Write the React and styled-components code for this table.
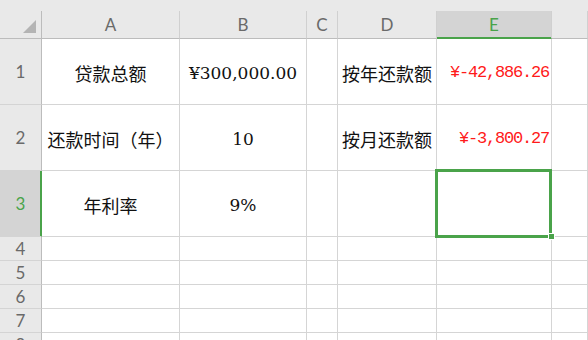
import styled, { createGlobalStyle, css } from 'styled-components'

const COLS = '42px 138px 127px 31px 99px 115px 1fr'
const GREEN = '#4aa34a'

const GlobalStyle = createGlobalStyle`
    body {
        margin: 0;
        overflow: hidden;
        background: #fff;
    }
`

const Sheet = styled.div`
    width: 588px;
    height: 340px;
    overflow: hidden;
    background: #fff;
`

const HeaderRow = styled.div`
    display: grid;
    grid-template-columns: ${COLS};
    background: #e9e9e9;
    padding-top: 11px;
`

const Corner = styled.div`
    height: 28px;
    box-sizing: border-box;
    border-right: 1px solid #bcbcbc;
    border-bottom: 1px solid #bcbcbc;
    display: flex;
    justify-content: flex-end;
    align-items: flex-end;
    padding: 0 5px 5px 0;
`

const headText = css`
    font-family: Lato, "Liberation Sans", sans-serif;
    font-size: 17px;
    color: #6a6a6a;
`

const ColHead = styled.div`
    ${headText};
    height: 28px;
    box-sizing: border-box;
    border-right: 1px solid #d0d0d0;
    border-bottom: 1px solid #bcbcbc;
    display: flex;
    align-items: center;
    justify-content: center;

    ${({ $active }) => $active && css`
        background: #d4d4d4;
        color: ${GREEN};
        border-bottom-color: ${GREEN};
        box-shadow: inset 0 -1px 0 ${GREEN};
    `}
`

const Row = styled.div`
    display: grid;
    grid-template-columns: ${COLS};
    height: ${({ $h }) => $h}px;
`

const RowHead = styled.div`
    ${headText};
    box-sizing: border-box;
    background: #e9e9e9;
    border-right: 1px solid #bcbcbc;
    border-bottom: 1px solid #d4d4d4;
    display: flex;
    align-items: center;
    justify-content: center;

    ${({ $active }) => $active && css`
        background: #d4d4d4;
        color: ${GREEN};
        border-right-color: ${GREEN};
        box-shadow: inset -1px 0 0 ${GREEN};
    `}
`

const Cell = styled.div`
    position: relative;
    box-sizing: border-box;
    border-right: 1px solid #d5d5d5;
    border-bottom: 1px solid #d5d5d5;
    display: flex;
    align-items: center;
    justify-content: ${({ $align }) => ($align === 'right' ? 'flex-end' : 'center')};
    padding: 2px 2px 0;
    white-space: nowrap;
`

const Label = styled.span`
    font-family: "Noto Sans CJK SC", sans-serif;
    font-size: 18px;
    color: #111;
`

const Amount = styled.span`
    font-family: "DejaVu Serif", serif;
    font-size: 17px;
    color: #111;
`

const Money = styled.span`
    font-family: "Liberation Mono", monospace;
    font-size: 17px;
    letter-spacing: -1.2px;
    color: #ff1a1a;
`

// active cell frame with the fill handle in its corner
const Selection = styled.div`
    position: absolute;
    left: -2px;
    top: -2px;
    right: -1px;
    bottom: -2px;
    border: 3px solid ${GREEN};
    z-index: 2;
    pointer-events: none;
`

const FillHandle = styled.div`
    position: absolute;
    right: -6px;
    bottom: -5px;
    width: 5px;
    height: 5px;
    background: ${GREEN};
    border: 1px solid #fff;
`

const SelectAll = () => (
    <svg width="13" height="13" viewBox="0 0 13 13">
        <polygon points="13,0 13,13 0,13" fill="#b4b4b4" />
    </svg>
)

// F is only partly on screen, its letter falls outside
const columns = [
    { key: 'A', label: 'A' },
    { key: 'B', label: 'B' },
    { key: 'C', label: 'C' },
    { key: 'D', label: 'D' },
    { key: 'E', label: 'E' },
    { key: 'F', label: '' },
]

const rows = [
    { n: 1, h: 66, a: '贷款总额', b: '¥300,000.00', d: '按年还款额', e: '¥-42,886.26' },
    { n: 2, h: 66, a: '还款时间（年）', b: '10', d: '按月还款额', e: '¥-3,800.27' },
    { n: 3, h: 66, a: '年利率', b: '9%', selected: true },
    { n: 4, h: 24 },
    { n: 5, h: 24 },
    { n: 6, h: 24 },
    { n: 7, h: 24 },
    { n: 8, h: 24 },
]

const App = () => {
    return (
        <Sheet>
            <GlobalStyle />
            <HeaderRow>
                <Corner>
                    <SelectAll />
                </Corner>
                {columns.map((c) => (
                    <ColHead key={c.key} $active={c.key === 'E'}>{c.label}</ColHead>
                ))}
            </HeaderRow>
            {rows.map((r) => (
                <Row key={r.n} $h={r.h}>
                    <RowHead $active={r.selected}>{r.n}</RowHead>
                    <Cell>{r.a && <Label>{r.a}</Label>}</Cell>
                    <Cell>{r.b && <Amount>{r.b}</Amount>}</Cell>
                    <Cell />
                    <Cell>{r.d && <Label>{r.d}</Label>}</Cell>
                    <Cell $align="right">
                        {r.e && <Money>{r.e}</Money>}
                        {r.selected && (
                            <Selection>
                                <FillHandle />
                            </Selection>
                        )}
                    </Cell>
                    <Cell />
                </Row>
            ))}
        </Sheet>
    )
}

export default App
